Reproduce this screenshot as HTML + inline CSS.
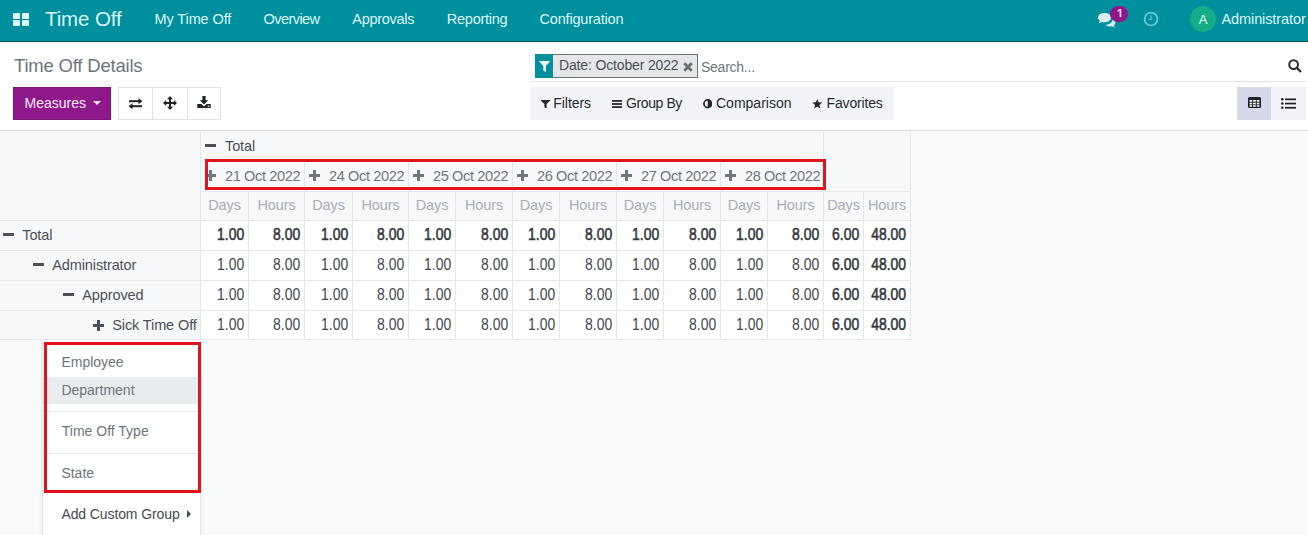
<!DOCTYPE html>
<html><head><meta charset="utf-8"><style>
html,body{margin:0;padding:0;width:1308px;height:535px;overflow:hidden;background:#f9fafb}
body{position:relative;font-family:"Liberation Sans", sans-serif}
.t{position:absolute;white-space:nowrap;font-family:"Liberation Sans", sans-serif}
.r{position:absolute}
</style></head><body>
<div class="r" style="left:0px;top:0px;width:1308px;height:41px;background:#008f9d;"></div>
<div class="r" style="left:0px;top:41px;width:1308px;height:1px;background:#04585f;"></div>
<div class="r" style="left:13px;top:13px;width:7.2px;height:6px;background:#dcf8f8;border-radius:1px"></div>
<div class="r" style="left:21.5px;top:13px;width:7.2px;height:6px;background:#dcf8f8;border-radius:1px"></div>
<div class="r" style="left:13px;top:19.8px;width:7.2px;height:6px;background:#dcf8f8;border-radius:1px"></div>
<div class="r" style="left:21.5px;top:19.8px;width:7.2px;height:6px;background:#dcf8f8;border-radius:1px"></div>
<div class="t" style="left:45px;top:8.57px;font-size:20.5px;line-height:20.5px;color:#dcf8f8;font-weight:400;letter-spacing:-0.1px;">Time Off</div>
<div class="t" style="left:154.5px;top:11.68px;font-size:14.5px;line-height:14.5px;color:#dcf8f8;font-weight:400;letter-spacing:-0.1px;">My Time Off</div>
<div class="t" style="left:263.5px;top:11.68px;font-size:14.5px;line-height:14.5px;color:#dcf8f8;font-weight:400;letter-spacing:-0.55px;">Overview</div>
<div class="t" style="left:352.3px;top:11.68px;font-size:14.5px;line-height:14.5px;color:#dcf8f8;font-weight:400;letter-spacing:-0.3px;">Approvals</div>
<div class="t" style="left:446.8px;top:11.68px;font-size:14.5px;line-height:14.5px;color:#dcf8f8;font-weight:400;letter-spacing:-0.25px;">Reporting</div>
<div class="t" style="left:539.6px;top:11.68px;font-size:14.5px;line-height:14.5px;color:#dcf8f8;font-weight:400;letter-spacing:-0.2px;">Configuration</div>
<svg class="r" style="left:1097px;top:12px" width="20" height="16" viewBox="0 0 20 16">
<path d="M7.5 1C3.6 1 1 3.1 1 5.6c0 1.3.7 2.4 1.8 3.2L1.6 11.6l3.3-1.6c.8.2 1.6.3 2.6.3 3.9 0 6.5-2.1 6.5-4.7S11.4 1 7.5 1z" fill="#d9eff0"/>
<path d="M15.3 6.3c.2.4.2.8.2 1.2 0 2.9-3 5.2-7 5.3.9 1.1 2.6 1.8 4.5 1.8.7 0 1.4-.1 2-.3l2.9 1.4-1-2.4c1-.7 1.6-1.7 1.6-2.8 0-1.8-1.3-3.4-3.2-4.2z" fill="#d9eff0"/>
</svg>
<div class="r" style="left:1110.2px;top:6.3px;width:18.2px;height:15.8px;background:#8d1889;border-radius:8px"></div>
<svg class="r" style="left:1117px;top:8.8px" width="5" height="8.2" viewBox="0 0 5 8.2"><path d="M2.6 0H4.3V8.2H2.6V2.1L0.6 2.8V1.3Z" fill="#f7d9f3"/></svg>
<svg class="r" style="left:1143px;top:10.8px" width="16" height="16" viewBox="0 0 16 16">
<circle cx="8" cy="8" r="6.4" fill="none" stroke="#5fcbd2" stroke-width="1.8"/>
<path d="M8 4.3V8.4H5.6" fill="none" stroke="#5cc7cf" stroke-width="1.3"/>
</svg>
<div class="r" style="left:1189.5px;top:6px;width:26px;height:26px;background:#14ad88;border-radius:13px"></div>
<div class="t" style="left:1198.8px;top:12.95px;font-size:13px;line-height:13px;color:#eafcf8;font-weight:400;letter-spacing:0px;">A</div>
<div class="t" style="left:1221.5px;top:11.68px;font-size:14.5px;line-height:14.5px;color:#dcf8f8;font-weight:400;letter-spacing:-0.1px;">Administrator</div>
<div class="r" style="left:0px;top:42px;width:1308px;height:88px;background:#ffffff;"></div>
<div class="r" style="left:0px;top:130px;width:1308px;height:1px;background:#d9dde2;"></div>
<div class="t" style="left:14px;top:57.27px;font-size:18.5px;line-height:18.5px;color:#6f757c;font-weight:400;letter-spacing:-0.2px;">Time Off Details</div>
<div class="r" style="left:13px;top:87px;width:98px;height:33px;background:#8f188a;box-sizing:border-box;border:1px solid #7d1579"></div>
<div class="t" style="left:24.5px;top:96.10px;font-size:14px;line-height:14px;color:#fbe9fa;font-weight:400;letter-spacing:0px;">Measures</div>
<div class="r" style="left:92.5px;top:101px;width:0;height:0;border-left:4.2px solid transparent;border-right:4.2px solid transparent;border-top:4.5px solid #fbe9fa"></div>
<div class="r" style="left:118px;top:87px;width:102.5px;height:33px;background:#ffffff;box-sizing:border-box;border:1px solid #dfe2e6"></div>
<div class="r" style="left:152px;top:87px;width:1px;height:33px;background:#dfe2e6;"></div>
<div class="r" style="left:187px;top:87px;width:1px;height:33px;background:#dfe2e6;"></div>
<svg class="r" style="left:128px;top:98px" width="15" height="11" viewBox="0 0 15 11">
<path d="M1 3.2H12" stroke="#1f2328" stroke-width="2"/><path d="M10.5 0.2L14.5 3.2L10.5 6.2Z" fill="#1f2328"/>
<path d="M3.5 8.2H14" stroke="#1f2328" stroke-width="2"/><path d="M4.5 5.2L0.5 8.2L4.5 11.2Z" fill="#1f2328"/>
</svg>
<svg class="r" style="left:163px;top:95.5px" width="14" height="14" viewBox="0 0 14 14">
<path d="M7 1.5V12.5M1.5 7H12.5" stroke="#1f2328" stroke-width="2"/>
<path d="M7 0L10 3.2H4Z M7 14L10 10.8H4Z M0 7L3.2 4V10Z M14 7L10.8 4V10Z" fill="#1f2328"/>
</svg>
<svg class="r" style="left:197.3px;top:95.8px" width="14" height="12.5" viewBox="0 0 14 13">
<path d="M5.3 0H8.7V4.5H11.5L7 8.8L2.5 4.5H5.3Z" fill="#1f2328"/>
<path d="M0 8.3H4.2L7 11L9.8 8.3H14V12.5H0Z" fill="#1f2328"/>
<rect x="10.8" y="10" width="1.8" height="1.2" fill="#fff"/>
</svg>
<div class="r" style="left:535px;top:54px;width:18px;height:23.5px;background:#058f9c;"></div>
<svg class="r" style="left:539.3px;top:61px" width="11.2" height="11" viewBox="0 0 11.2 11">
<path d="M0 0H11.2L6.9 5V11L4.3 9.6V5Z" fill="#eefefe"/>
</svg>
<div class="r" style="left:553px;top:54px;width:145px;height:23.5px;background:#e4e6e8;box-sizing:border-box;border:1px solid #6f767b;border-left:0"></div>
<div class="t" style="left:559px;top:58.10px;font-size:14px;line-height:14px;color:#4a4f54;font-weight:400;letter-spacing:-0.15px;">Date: October 2022</div>
<svg class="r" style="left:683px;top:62px" width="10" height="10" viewBox="0 0 10 10">
<path d="M1.3 1.3L8.7 8.7M8.7 1.3L1.3 8.7" stroke="#686e74" stroke-width="2.8"/>
</svg>
<div class="t" style="left:701px;top:60.30px;font-size:14px;line-height:14px;color:#70767c;font-weight:400;letter-spacing:-0.25px;">Search...</div>
<div class="r" style="left:530px;top:81px;width:776px;height:1px;background:#e1e4e8;"></div>
<svg class="r" style="left:1288px;top:58.5px" width="14" height="14" viewBox="0 0 14 14">
<circle cx="5.6" cy="5.6" r="4.4" fill="none" stroke="#2c3035" stroke-width="2"/>
<path d="M8.8 8.8L12.4 12.4" stroke="#2c3035" stroke-width="2.2" stroke-linecap="round"/>
</svg>
<div class="r" style="left:530px;top:87px;width:364px;height:32.5px;background:#f3f4f8;"></div>
<svg class="r" style="left:540.8px;top:99.8px" width="9" height="8.7" viewBox="0 0 9 8.7">
<path d="M0 0H9V0.8L5.6 3.9V8.7L3.4 7.3V3.9L0 0.8Z" fill="#262a2e"/></svg>
<div class="t" style="left:553.3px;top:95.80px;font-size:14px;line-height:14px;color:#262a2e;font-weight:400;letter-spacing:-0.05px;">Filters</div>
<svg class="r" style="left:612px;top:100px" width="10" height="8" viewBox="0 0 10 8">
<rect y="0" width="10" height="1.8" fill="#262a2e"/><rect y="3.1" width="10" height="1.8" fill="#262a2e"/><rect y="6.2" width="10" height="1.8" fill="#262a2e"/></svg>
<div class="t" style="left:626px;top:95.80px;font-size:14px;line-height:14px;color:#262a2e;font-weight:400;letter-spacing:-0.4px;">Group By</div>
<svg class="r" style="left:702.5px;top:99px" width="9.5" height="9.5" viewBox="0 0 10 10">
<circle cx="5" cy="5" r="4" fill="none" stroke="#262a2e" stroke-width="1.8"/><path d="M5 1A4 4 0 0 1 5 9Z" fill="#262a2e"/></svg>
<div class="t" style="left:716px;top:95.80px;font-size:14px;line-height:14px;color:#262a2e;font-weight:400;letter-spacing:0px;">Comparison</div>
<svg class="r" style="left:812px;top:98.5px" width="10.5" height="10" viewBox="0 0 24 23">
<path d="M12 0L15.1 7.6L23.4 8.3L17.1 13.7L19 21.8L12 17.5L5 21.8L6.9 13.7L0.6 8.3L8.9 7.6Z" fill="#262a2e"/></svg>
<div class="t" style="left:826.5px;top:95.80px;font-size:14px;line-height:14px;color:#262a2e;font-weight:400;letter-spacing:-0.15px;">Favorites</div>
<div class="r" style="left:1237px;top:87px;width:34px;height:33px;background:#d5d8e9;"></div>
<div class="r" style="left:1271px;top:87px;width:35px;height:33px;background:#f3f4f8;"></div>
<svg class="r" style="left:1248px;top:97px" width="13" height="11" viewBox="0 0 13 11">
<rect x="0" y="0" width="13" height="11" rx="1.5" fill="#1d2127"/>
<g fill="#fff"><rect x="1.6" y="3" width="2.6" height="1.7"/><rect x="5.2" y="3" width="2.6" height="1.7"/><rect x="8.8" y="3" width="2.6" height="1.7"/>
<rect x="1.6" y="5.7" width="2.6" height="1.7"/><rect x="5.2" y="5.7" width="2.6" height="1.7"/><rect x="8.8" y="5.7" width="2.6" height="1.7"/>
<rect x="1.6" y="8.2" width="2.6" height="1.5"/><rect x="5.2" y="8.2" width="2.6" height="1.5"/><rect x="8.8" y="8.2" width="2.6" height="1.5"/></g></svg>
<svg class="r" style="left:1281px;top:97.5px" width="15" height="11" viewBox="0 0 15 11">
<g fill="#1d2127"><circle cx="1.3" cy="1.3" r="1.3"/><circle cx="1.3" cy="5.5" r="1.3"/><circle cx="1.3" cy="9.7" r="1.3"/>
<rect x="4" y="0.5" width="11" height="1.7"/><rect x="4" y="4.7" width="11" height="1.7"/><rect x="4" y="8.9" width="11" height="1.7"/></g></svg>
<div class="r" style="left:0px;top:131px;width:1308px;height:404px;background:#f9fafb;"></div>
<div class="r" style="left:0px;top:131px;width:910px;height:89px;background:#f7f8fa;"></div>
<div class="r" style="left:0px;top:220px;width:200px;height:119px;background:#f7f8fa;"></div>
<div class="r" style="left:200px;top:220px;width:710px;height:119px;background:#ffffff;"></div>
<div class="r" style="left:0px;top:220px;width:911px;height:1px;background:#e5e7eb;"></div>
<div class="r" style="left:0px;top:250px;width:911px;height:1px;background:#e5e7eb;"></div>
<div class="r" style="left:0px;top:280px;width:911px;height:1px;background:#e5e7eb;"></div>
<div class="r" style="left:0px;top:310px;width:911px;height:1px;background:#e5e7eb;"></div>
<div class="r" style="left:0px;top:339px;width:911px;height:1px;background:#e5e7eb;"></div>
<div class="r" style="left:200px;top:191px;width:710px;height:1px;background:#e5e7eb;"></div>
<div class="r" style="left:200px;top:161px;width:623px;height:1px;background:#e5e7eb;"></div>
<div class="r" style="left:200px;top:131px;width:1px;height:208px;background:#e5e7eb;"></div>
<div class="r" style="left:823px;top:131px;width:1px;height:208px;background:#e5e7eb;"></div>
<div class="r" style="left:910px;top:131px;width:1px;height:209px;background:#e5e7eb;"></div>
<div class="r" style="left:304px;top:161px;width:1px;height:178px;background:#e5e7eb;"></div>
<div class="r" style="left:408px;top:161px;width:1px;height:178px;background:#e5e7eb;"></div>
<div class="r" style="left:512px;top:161px;width:1px;height:178px;background:#e5e7eb;"></div>
<div class="r" style="left:616px;top:161px;width:1px;height:178px;background:#e5e7eb;"></div>
<div class="r" style="left:720px;top:161px;width:1px;height:178px;background:#e5e7eb;"></div>
<div class="r" style="left:248px;top:191px;width:1px;height:148px;background:#e5e7eb;"></div>
<div class="r" style="left:352px;top:191px;width:1px;height:148px;background:#e5e7eb;"></div>
<div class="r" style="left:455px;top:191px;width:1px;height:148px;background:#e5e7eb;"></div>
<div class="r" style="left:559px;top:191px;width:1px;height:148px;background:#e5e7eb;"></div>
<div class="r" style="left:663px;top:191px;width:1px;height:148px;background:#e5e7eb;"></div>
<div class="r" style="left:767px;top:191px;width:1px;height:148px;background:#e5e7eb;"></div>
<div class="r" style="left:863px;top:191px;width:1px;height:148px;background:#e5e7eb;"></div>
<div class="r" style="left:205px;top:144px;width:11px;height:3px;background:#4b5056;"></div>
<div class="t" style="left:225px;top:138.68px;font-size:14.5px;line-height:14.5px;color:#4b5056;font-weight:400;letter-spacing:-0.12px;">Total</div>
<svg class="r" style="left:205px;top:170px" width="11" height="11" viewBox="0 0 11 11"><path d="M4 0H7V4H11V7H7V11H4V7H0V4H4Z" fill="#70767d"/></svg>
<div class="t" style="left:225px;top:168.98px;font-size:14.5px;line-height:14.5px;color:#70767d;font-weight:400;letter-spacing:-0.35px;">21 Oct 2022</div>
<svg class="r" style="left:309px;top:170px" width="11" height="11" viewBox="0 0 11 11"><path d="M4 0H7V4H11V7H7V11H4V7H0V4H4Z" fill="#70767d"/></svg>
<div class="t" style="left:329px;top:168.98px;font-size:14.5px;line-height:14.5px;color:#70767d;font-weight:400;letter-spacing:-0.35px;">24 Oct 2022</div>
<svg class="r" style="left:413px;top:170px" width="11" height="11" viewBox="0 0 11 11"><path d="M4 0H7V4H11V7H7V11H4V7H0V4H4Z" fill="#70767d"/></svg>
<div class="t" style="left:433px;top:168.98px;font-size:14.5px;line-height:14.5px;color:#70767d;font-weight:400;letter-spacing:-0.35px;">25 Oct 2022</div>
<svg class="r" style="left:517px;top:170px" width="11" height="11" viewBox="0 0 11 11"><path d="M4 0H7V4H11V7H7V11H4V7H0V4H4Z" fill="#70767d"/></svg>
<div class="t" style="left:537px;top:168.98px;font-size:14.5px;line-height:14.5px;color:#70767d;font-weight:400;letter-spacing:-0.35px;">26 Oct 2022</div>
<svg class="r" style="left:621px;top:170px" width="11" height="11" viewBox="0 0 11 11"><path d="M4 0H7V4H11V7H7V11H4V7H0V4H4Z" fill="#70767d"/></svg>
<div class="t" style="left:641px;top:168.98px;font-size:14.5px;line-height:14.5px;color:#70767d;font-weight:400;letter-spacing:-0.35px;">27 Oct 2022</div>
<svg class="r" style="left:725px;top:170px" width="11" height="11" viewBox="0 0 11 11"><path d="M4 0H7V4H11V7H7V11H4V7H0V4H4Z" fill="#70767d"/></svg>
<div class="t" style="left:745px;top:168.98px;font-size:14.5px;line-height:14.5px;color:#70767d;font-weight:400;letter-spacing:-0.35px;">28 Oct 2022</div>
<div class="t" style="left:200.5px;width:48.0px;text-align:center;top:198.28px;font-size:14.5px;line-height:14.5px;color:#a9aeb5;font-weight:400;letter-spacing:-0.12px">Days</div>
<div class="t" style="left:248.5px;width:56.0px;text-align:center;top:198.28px;font-size:14.5px;line-height:14.5px;color:#a9aeb5;font-weight:400;letter-spacing:-0.12px">Hours</div>
<div class="t" style="left:304.5px;width:48.0px;text-align:center;top:198.28px;font-size:14.5px;line-height:14.5px;color:#a9aeb5;font-weight:400;letter-spacing:-0.12px">Days</div>
<div class="t" style="left:352.5px;width:56.0px;text-align:center;top:198.28px;font-size:14.5px;line-height:14.5px;color:#a9aeb5;font-weight:400;letter-spacing:-0.12px">Hours</div>
<div class="t" style="left:408.5px;width:47.0px;text-align:center;top:198.28px;font-size:14.5px;line-height:14.5px;color:#a9aeb5;font-weight:400;letter-spacing:-0.12px">Days</div>
<div class="t" style="left:455.5px;width:57.0px;text-align:center;top:198.28px;font-size:14.5px;line-height:14.5px;color:#a9aeb5;font-weight:400;letter-spacing:-0.12px">Hours</div>
<div class="t" style="left:512.5px;width:47.0px;text-align:center;top:198.28px;font-size:14.5px;line-height:14.5px;color:#a9aeb5;font-weight:400;letter-spacing:-0.12px">Days</div>
<div class="t" style="left:559.5px;width:57.0px;text-align:center;top:198.28px;font-size:14.5px;line-height:14.5px;color:#a9aeb5;font-weight:400;letter-spacing:-0.12px">Hours</div>
<div class="t" style="left:616.5px;width:47.0px;text-align:center;top:198.28px;font-size:14.5px;line-height:14.5px;color:#a9aeb5;font-weight:400;letter-spacing:-0.12px">Days</div>
<div class="t" style="left:663.5px;width:57.0px;text-align:center;top:198.28px;font-size:14.5px;line-height:14.5px;color:#a9aeb5;font-weight:400;letter-spacing:-0.12px">Hours</div>
<div class="t" style="left:720.5px;width:47.0px;text-align:center;top:198.28px;font-size:14.5px;line-height:14.5px;color:#a9aeb5;font-weight:400;letter-spacing:-0.12px">Days</div>
<div class="t" style="left:767.5px;width:56.0px;text-align:center;top:198.28px;font-size:14.5px;line-height:14.5px;color:#a9aeb5;font-weight:400;letter-spacing:-0.12px">Hours</div>
<div class="t" style="left:823.5px;width:40.0px;text-align:center;top:198.28px;font-size:14.5px;line-height:14.5px;color:#a9aeb5;font-weight:400;letter-spacing:-0.12px">Days</div>
<div class="t" style="left:863.5px;width:47.0px;text-align:center;top:198.28px;font-size:14.5px;line-height:14.5px;color:#a9aeb5;font-weight:400;letter-spacing:-0.12px">Hours</div>
<div class="r" style="left:3px;top:233px;width:11px;height:3px;background:#4b5056;"></div>
<div class="t" style="left:22.3px;top:227.98px;font-size:14.5px;line-height:14.5px;color:#4b5056;font-weight:400;letter-spacing:-0.12px;">Total</div>
<div class="t" style="right:1063.8px;top:226.70px;font-size:16px;line-height:16px;color:#33383e;-webkit-text-stroke:0.55px #33383e;transform:scaleX(0.87);transform-origin:100% 50%">1.00</div>
<div class="t" style="right:1007.8px;top:226.70px;font-size:16px;line-height:16px;color:#33383e;-webkit-text-stroke:0.55px #33383e;transform:scaleX(0.87);transform-origin:100% 50%">8.00</div>
<div class="t" style="right:959.8px;top:226.70px;font-size:16px;line-height:16px;color:#33383e;-webkit-text-stroke:0.55px #33383e;transform:scaleX(0.87);transform-origin:100% 50%">1.00</div>
<div class="t" style="right:903.8px;top:226.70px;font-size:16px;line-height:16px;color:#33383e;-webkit-text-stroke:0.55px #33383e;transform:scaleX(0.87);transform-origin:100% 50%">8.00</div>
<div class="t" style="right:856.8px;top:226.70px;font-size:16px;line-height:16px;color:#33383e;-webkit-text-stroke:0.55px #33383e;transform:scaleX(0.87);transform-origin:100% 50%">1.00</div>
<div class="t" style="right:799.8px;top:226.70px;font-size:16px;line-height:16px;color:#33383e;-webkit-text-stroke:0.55px #33383e;transform:scaleX(0.87);transform-origin:100% 50%">8.00</div>
<div class="t" style="right:752.8px;top:226.70px;font-size:16px;line-height:16px;color:#33383e;-webkit-text-stroke:0.55px #33383e;transform:scaleX(0.87);transform-origin:100% 50%">1.00</div>
<div class="t" style="right:695.8px;top:226.70px;font-size:16px;line-height:16px;color:#33383e;-webkit-text-stroke:0.55px #33383e;transform:scaleX(0.87);transform-origin:100% 50%">8.00</div>
<div class="t" style="right:648.8px;top:226.70px;font-size:16px;line-height:16px;color:#33383e;-webkit-text-stroke:0.55px #33383e;transform:scaleX(0.87);transform-origin:100% 50%">1.00</div>
<div class="t" style="right:591.8px;top:226.70px;font-size:16px;line-height:16px;color:#33383e;-webkit-text-stroke:0.55px #33383e;transform:scaleX(0.87);transform-origin:100% 50%">8.00</div>
<div class="t" style="right:544.8px;top:226.70px;font-size:16px;line-height:16px;color:#33383e;-webkit-text-stroke:0.55px #33383e;transform:scaleX(0.87);transform-origin:100% 50%">1.00</div>
<div class="t" style="right:488.79999999999995px;top:226.70px;font-size:16px;line-height:16px;color:#33383e;-webkit-text-stroke:0.55px #33383e;transform:scaleX(0.87);transform-origin:100% 50%">8.00</div>
<div class="t" style="right:448.79999999999995px;top:226.70px;font-size:16px;line-height:16px;color:#33383e;-webkit-text-stroke:0.55px #33383e;transform:scaleX(0.87);transform-origin:100% 50%">6.00</div>
<div class="t" style="right:401.79999999999995px;top:226.70px;font-size:16px;line-height:16px;color:#33383e;-webkit-text-stroke:0.55px #33383e;transform:scaleX(0.87);transform-origin:100% 50%">48.00</div>
<div class="r" style="left:33px;top:263px;width:11px;height:3px;background:#4b5056;"></div>
<div class="t" style="left:52.3px;top:257.98px;font-size:14.5px;line-height:14.5px;color:#4b5056;font-weight:400;letter-spacing:-0.12px;">Administrator</div>
<div class="t" style="right:1063.8px;top:256.70px;font-size:16px;line-height:16px;color:#42474d;font-weight:400;letter-spacing:0px;transform:scaleX(0.87);transform-origin:100% 50%">1.00</div>
<div class="t" style="right:1007.8px;top:256.70px;font-size:16px;line-height:16px;color:#42474d;font-weight:400;letter-spacing:0px;transform:scaleX(0.87);transform-origin:100% 50%">8.00</div>
<div class="t" style="right:959.8px;top:256.70px;font-size:16px;line-height:16px;color:#42474d;font-weight:400;letter-spacing:0px;transform:scaleX(0.87);transform-origin:100% 50%">1.00</div>
<div class="t" style="right:903.8px;top:256.70px;font-size:16px;line-height:16px;color:#42474d;font-weight:400;letter-spacing:0px;transform:scaleX(0.87);transform-origin:100% 50%">8.00</div>
<div class="t" style="right:856.8px;top:256.70px;font-size:16px;line-height:16px;color:#42474d;font-weight:400;letter-spacing:0px;transform:scaleX(0.87);transform-origin:100% 50%">1.00</div>
<div class="t" style="right:799.8px;top:256.70px;font-size:16px;line-height:16px;color:#42474d;font-weight:400;letter-spacing:0px;transform:scaleX(0.87);transform-origin:100% 50%">8.00</div>
<div class="t" style="right:752.8px;top:256.70px;font-size:16px;line-height:16px;color:#42474d;font-weight:400;letter-spacing:0px;transform:scaleX(0.87);transform-origin:100% 50%">1.00</div>
<div class="t" style="right:695.8px;top:256.70px;font-size:16px;line-height:16px;color:#42474d;font-weight:400;letter-spacing:0px;transform:scaleX(0.87);transform-origin:100% 50%">8.00</div>
<div class="t" style="right:648.8px;top:256.70px;font-size:16px;line-height:16px;color:#42474d;font-weight:400;letter-spacing:0px;transform:scaleX(0.87);transform-origin:100% 50%">1.00</div>
<div class="t" style="right:591.8px;top:256.70px;font-size:16px;line-height:16px;color:#42474d;font-weight:400;letter-spacing:0px;transform:scaleX(0.87);transform-origin:100% 50%">8.00</div>
<div class="t" style="right:544.8px;top:256.70px;font-size:16px;line-height:16px;color:#42474d;font-weight:400;letter-spacing:0px;transform:scaleX(0.87);transform-origin:100% 50%">1.00</div>
<div class="t" style="right:488.79999999999995px;top:256.70px;font-size:16px;line-height:16px;color:#42474d;font-weight:400;letter-spacing:0px;transform:scaleX(0.87);transform-origin:100% 50%">8.00</div>
<div class="t" style="right:448.79999999999995px;top:256.70px;font-size:16px;line-height:16px;color:#33383e;-webkit-text-stroke:0.55px #33383e;transform:scaleX(0.87);transform-origin:100% 50%">6.00</div>
<div class="t" style="right:401.79999999999995px;top:256.70px;font-size:16px;line-height:16px;color:#33383e;-webkit-text-stroke:0.55px #33383e;transform:scaleX(0.87);transform-origin:100% 50%">48.00</div>
<div class="r" style="left:63px;top:293px;width:11px;height:3px;background:#4b5056;"></div>
<div class="t" style="left:82.3px;top:287.98px;font-size:14.5px;line-height:14.5px;color:#4b5056;font-weight:400;letter-spacing:-0.12px;">Approved</div>
<div class="t" style="right:1063.8px;top:286.70px;font-size:16px;line-height:16px;color:#42474d;font-weight:400;letter-spacing:0px;transform:scaleX(0.87);transform-origin:100% 50%">1.00</div>
<div class="t" style="right:1007.8px;top:286.70px;font-size:16px;line-height:16px;color:#42474d;font-weight:400;letter-spacing:0px;transform:scaleX(0.87);transform-origin:100% 50%">8.00</div>
<div class="t" style="right:959.8px;top:286.70px;font-size:16px;line-height:16px;color:#42474d;font-weight:400;letter-spacing:0px;transform:scaleX(0.87);transform-origin:100% 50%">1.00</div>
<div class="t" style="right:903.8px;top:286.70px;font-size:16px;line-height:16px;color:#42474d;font-weight:400;letter-spacing:0px;transform:scaleX(0.87);transform-origin:100% 50%">8.00</div>
<div class="t" style="right:856.8px;top:286.70px;font-size:16px;line-height:16px;color:#42474d;font-weight:400;letter-spacing:0px;transform:scaleX(0.87);transform-origin:100% 50%">1.00</div>
<div class="t" style="right:799.8px;top:286.70px;font-size:16px;line-height:16px;color:#42474d;font-weight:400;letter-spacing:0px;transform:scaleX(0.87);transform-origin:100% 50%">8.00</div>
<div class="t" style="right:752.8px;top:286.70px;font-size:16px;line-height:16px;color:#42474d;font-weight:400;letter-spacing:0px;transform:scaleX(0.87);transform-origin:100% 50%">1.00</div>
<div class="t" style="right:695.8px;top:286.70px;font-size:16px;line-height:16px;color:#42474d;font-weight:400;letter-spacing:0px;transform:scaleX(0.87);transform-origin:100% 50%">8.00</div>
<div class="t" style="right:648.8px;top:286.70px;font-size:16px;line-height:16px;color:#42474d;font-weight:400;letter-spacing:0px;transform:scaleX(0.87);transform-origin:100% 50%">1.00</div>
<div class="t" style="right:591.8px;top:286.70px;font-size:16px;line-height:16px;color:#42474d;font-weight:400;letter-spacing:0px;transform:scaleX(0.87);transform-origin:100% 50%">8.00</div>
<div class="t" style="right:544.8px;top:286.70px;font-size:16px;line-height:16px;color:#42474d;font-weight:400;letter-spacing:0px;transform:scaleX(0.87);transform-origin:100% 50%">1.00</div>
<div class="t" style="right:488.79999999999995px;top:286.70px;font-size:16px;line-height:16px;color:#42474d;font-weight:400;letter-spacing:0px;transform:scaleX(0.87);transform-origin:100% 50%">8.00</div>
<div class="t" style="right:448.79999999999995px;top:286.70px;font-size:16px;line-height:16px;color:#33383e;-webkit-text-stroke:0.55px #33383e;transform:scaleX(0.87);transform-origin:100% 50%">6.00</div>
<div class="t" style="right:401.79999999999995px;top:286.70px;font-size:16px;line-height:16px;color:#33383e;-webkit-text-stroke:0.55px #33383e;transform:scaleX(0.87);transform-origin:100% 50%">48.00</div>
<svg class="r" style="left:93px;top:319.5px" width="11" height="11" viewBox="0 0 11 11"><path d="M4 0H7V4H11V7H7V11H4V7H0V4H4Z" fill="#4b5056"/></svg>
<div class="t" style="left:112.3px;top:317.98px;font-size:14.5px;line-height:14.5px;color:#4b5056;font-weight:400;letter-spacing:-0.12px;">Sick Time Off</div>
<div class="t" style="right:1063.8px;top:316.70px;font-size:16px;line-height:16px;color:#42474d;font-weight:400;letter-spacing:0px;transform:scaleX(0.87);transform-origin:100% 50%">1.00</div>
<div class="t" style="right:1007.8px;top:316.70px;font-size:16px;line-height:16px;color:#42474d;font-weight:400;letter-spacing:0px;transform:scaleX(0.87);transform-origin:100% 50%">8.00</div>
<div class="t" style="right:959.8px;top:316.70px;font-size:16px;line-height:16px;color:#42474d;font-weight:400;letter-spacing:0px;transform:scaleX(0.87);transform-origin:100% 50%">1.00</div>
<div class="t" style="right:903.8px;top:316.70px;font-size:16px;line-height:16px;color:#42474d;font-weight:400;letter-spacing:0px;transform:scaleX(0.87);transform-origin:100% 50%">8.00</div>
<div class="t" style="right:856.8px;top:316.70px;font-size:16px;line-height:16px;color:#42474d;font-weight:400;letter-spacing:0px;transform:scaleX(0.87);transform-origin:100% 50%">1.00</div>
<div class="t" style="right:799.8px;top:316.70px;font-size:16px;line-height:16px;color:#42474d;font-weight:400;letter-spacing:0px;transform:scaleX(0.87);transform-origin:100% 50%">8.00</div>
<div class="t" style="right:752.8px;top:316.70px;font-size:16px;line-height:16px;color:#42474d;font-weight:400;letter-spacing:0px;transform:scaleX(0.87);transform-origin:100% 50%">1.00</div>
<div class="t" style="right:695.8px;top:316.70px;font-size:16px;line-height:16px;color:#42474d;font-weight:400;letter-spacing:0px;transform:scaleX(0.87);transform-origin:100% 50%">8.00</div>
<div class="t" style="right:648.8px;top:316.70px;font-size:16px;line-height:16px;color:#42474d;font-weight:400;letter-spacing:0px;transform:scaleX(0.87);transform-origin:100% 50%">1.00</div>
<div class="t" style="right:591.8px;top:316.70px;font-size:16px;line-height:16px;color:#42474d;font-weight:400;letter-spacing:0px;transform:scaleX(0.87);transform-origin:100% 50%">8.00</div>
<div class="t" style="right:544.8px;top:316.70px;font-size:16px;line-height:16px;color:#42474d;font-weight:400;letter-spacing:0px;transform:scaleX(0.87);transform-origin:100% 50%">1.00</div>
<div class="t" style="right:488.79999999999995px;top:316.70px;font-size:16px;line-height:16px;color:#42474d;font-weight:400;letter-spacing:0px;transform:scaleX(0.87);transform-origin:100% 50%">8.00</div>
<div class="t" style="right:448.79999999999995px;top:316.70px;font-size:16px;line-height:16px;color:#33383e;-webkit-text-stroke:0.55px #33383e;transform:scaleX(0.87);transform-origin:100% 50%">6.00</div>
<div class="t" style="right:401.79999999999995px;top:316.70px;font-size:16px;line-height:16px;color:#33383e;-webkit-text-stroke:0.55px #33383e;transform:scaleX(0.87);transform-origin:100% 50%">48.00</div>
<div class="r" style="left:205px;top:159.3px;width:621px;height:30.5px;box-sizing:border-box;border:3px solid #e1141c"></div>
<div class="r" style="left:42px;top:340px;width:159px;height:200px;background:#fff;box-sizing:border-box;border:1px solid #e4e6ea;border-top:0;box-shadow:0 2px 4px rgba(0,0,0,0.08)"></div>
<div class="r" style="left:43px;top:377px;width:157px;height:26.5px;background:#e9ecef;"></div>
<div class="r" style="left:43px;top:411px;width:157px;height:1px;background:#e7e9ec;"></div>
<div class="r" style="left:43px;top:452.5px;width:157px;height:1px;background:#e7e9ec;"></div>
<div class="t" style="left:61.4px;top:354.90px;font-size:14px;line-height:14px;color:#6f757b;font-weight:400;letter-spacing:0px;">Employee</div>
<div class="t" style="left:61.4px;top:382.60px;font-size:14px;line-height:14px;color:#6f757b;font-weight:400;letter-spacing:0px;">Department</div>
<div class="t" style="left:61.8px;top:424.40px;font-size:14px;line-height:14px;color:#6f757b;font-weight:400;letter-spacing:0px;">Time Off Type</div>
<div class="t" style="left:61.4px;top:466.40px;font-size:14px;line-height:14px;color:#6f757b;font-weight:400;letter-spacing:0px;">State</div>
<div class="t" style="left:61.4px;top:506.80px;font-size:14px;line-height:14px;color:#464b51;font-weight:400;letter-spacing:-0.1px;">Add Custom Group</div>
<div class="r" style="left:187px;top:509.5px;width:0;height:0;border-top:4px solid transparent;border-bottom:4px solid transparent;border-left:4px solid #464b51"></div>
<div class="r" style="left:44px;top:342.3px;width:156.5px;height:150.5px;box-sizing:border-box;border:3px solid #e1141c"></div>
</body></html>
